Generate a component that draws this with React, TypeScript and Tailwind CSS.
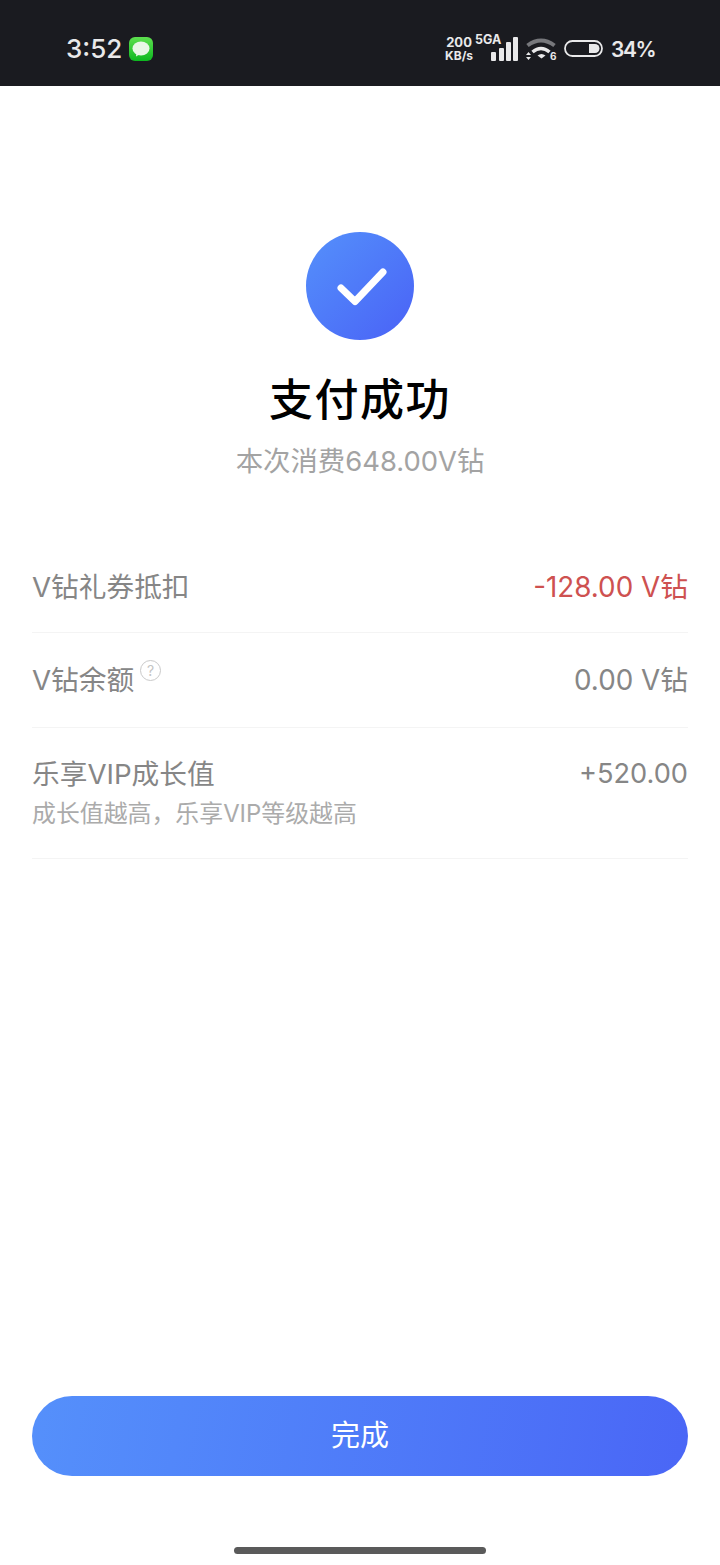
const cjk = "font-['Inter','Noto_Sans_CJK_SC',sans-serif]";

function StatusBar() {
  return (
    <div className="h-[86px] bg-[#1a1b20] flex items-center justify-between pt-[12px] pl-[66px] pr-[65px] text-[#e9e9ea] font-['Inter',sans-serif]">
      <div className="flex items-center gap-[7px]">
        <span className="text-[26px] font-medium leading-none">3:52</span>
        <svg width="24" height="24" viewBox="0 0 24 24">
          <defs>
            <linearGradient id="m" x1="0" y1="0" x2="0" y2="1">
              <stop offset="0" stopColor="#5ee04f" />
              <stop offset="1" stopColor="#0cb81f" />
            </linearGradient>
          </defs>
          <rect width="24" height="24" rx="6" fill="url(#m)" />
          <ellipse cx="12" cy="11.5" rx="8.5" ry="7" fill="#e8f7e6" />
          <path d="M7.5 15.5 L7 19.5 L11 17 Z" fill="#e8f7e6" />
        </svg>
      </div>
      <div className="flex items-center">
        <div className="flex flex-col items-center font-bold text-[13px] leading-[14px] w-[30px]">
          <span>200</span>
          <span className="text-[12px]">KB/s</span>
        </div>
        <svg width="44" height="30" viewBox="0 0 44 30" className="ml-[1px] mt-[-4px]">
          <rect x="16" y="20" width="5" height="9" rx="1" fill="#e9e9ea" />
          <rect x="24" y="16" width="5" height="13" rx="1" fill="#e9e9ea" />
          <rect x="31" y="10" width="5" height="19" rx="1" fill="#e9e9ea" />
          <rect x="38" y="5" width="5" height="24" rx="1" fill="#e9e9ea" />
          <text x="0" y="12" fontSize="12.5" fontWeight="700" fill="#e9e9ea" fontFamily="Inter">5GA</text>
        </svg>
        <svg width="32" height="24" viewBox="0 0 32 24" className="ml-[6px]">
          <path d="M2.5 8.5 Q16 -1.5 29.5 8.5" fill="none" stroke="#77787c" strokeWidth="4" />
          <path d="M7.5 15 Q16 8 24.5 15" fill="none" stroke="#e9e9ea" strokeWidth="3.5" />
          <path d="M12.5 18.5 Q16.5 15.5 20.5 18.5 L16.5 21.5 Z" fill="#e9e9ea" />
          <path d="M1 18 L3.5 15 L6 18 Z M1 20 L6 20 L3.5 23 Z" fill="#e9e9ea" />
          <text x="25" y="23" fontSize="10" fontWeight="700" fill="#e9e9ea" fontFamily="Inter">6</text>
        </svg>
        <svg width="40" height="20" viewBox="0 0 40 20" className="ml-[7px]">
          <rect x="1" y="2" width="37" height="15" rx="7.5" fill="none" stroke="#e9e9ea" strokeWidth="1.8" />
          <path d="M25 5 H31 A4.5 4.5 0 0 1 31 14 H25 Z" fill="#e9e9ea" />
        </svg>
        <span className="ml-[7px] text-[21px] font-semibold leading-none tracking-[-1.5px]">34%</span>
      </div>
    </div>
  );
}

function Row({ label, value, valueClass = "text-[28px] text-[#868686]", hint, sub, className = "" }: { label: string; value: string; valueClass?: string; hint?: boolean; sub?: string; className?: string }) {
  return (
    <div className={`flex justify-between border-b border-[#f4f4f4] ${className}`}>
      <div className="flex flex-col">
        <div className="flex items-start">
          <span className="text-[27.7px] leading-[32px] text-[#868686]">{label}</span>
          {hint && (
            <span className="ml-[6px] mt-[-4px] w-[21px] h-[21px] rounded-full border border-[#c9c9c9] text-[#c4c4c4] text-[14px] leading-[19px] text-center">?</span>
          )}
        </div>
        {sub && <span className="text-[23.9px] leading-[30px] mt-[9px] text-[#ababab]">{sub}</span>}
      </div>
      <span className={`leading-[32px] ${valueClass}`}>{value}</span>
    </div>
  );
}

export default function App() {
  return (
    <div className={`relative w-[720px] h-[1565px] bg-white flex flex-col overflow-hidden ${cjk}`}>
      <StatusBar />
      <div className="flex flex-col items-center mt-[146px]">
        <div className="w-[108px] h-[108px] rounded-full bg-gradient-to-br from-[#5590fb] to-[#4a61f6] flex items-center justify-center">
          <svg width="52" height="40" viewBox="0 0 52 40" fill="none" className="ml-[3px] mt-[3px]">
            <path d="M5 20 L19 33.5 L47 4" stroke="white" strokeWidth="7" strokeLinecap="round" strokeLinejoin="round" />
          </svg>
        </div>
        <h1 className="mt-[30px] text-[44px] leading-[60px] font-medium text-black tracking-[1.5px]">支付成功</h1>
        <p className="mt-[13px] text-[27.4px] leading-[36px] text-[#a3a3a3]">本次消费648.00V钻</p>
      </div>
      <div className="mx-[32px] mt-[59px] flex flex-col">
        <Row label="V钻礼券抵扣" value="-128.00 V钻" valueClass="text-[27.8px] text-[#ce5150]" className="h-[95px] pt-[33px]" />
        <Row label="V钻余额" value="0.00 V钻" valueClass="text-[27.8px] text-[#868686]" hint className="h-[95px] pt-[31px]" />
        <Row label="乐享VIP成长值" value="+520.00" valueClass="text-[27.2px] text-[#868686]" sub="成长值越高，乐享VIP等级越高" className="h-[131px] pt-[30px]" />
      </div>
      <div className="flex-1" />
      <button className="mx-[32px] h-[80px] rounded-[40px] bg-linear-100 from-[#5590fb] to-[#4a66f6] text-white text-[29px]">完成</button>
      <div className="mt-[71px] mb-[11px] mx-auto w-[252px] h-[7px] rounded-full bg-[#5a5a5a]" />
    </div>
  );
}
